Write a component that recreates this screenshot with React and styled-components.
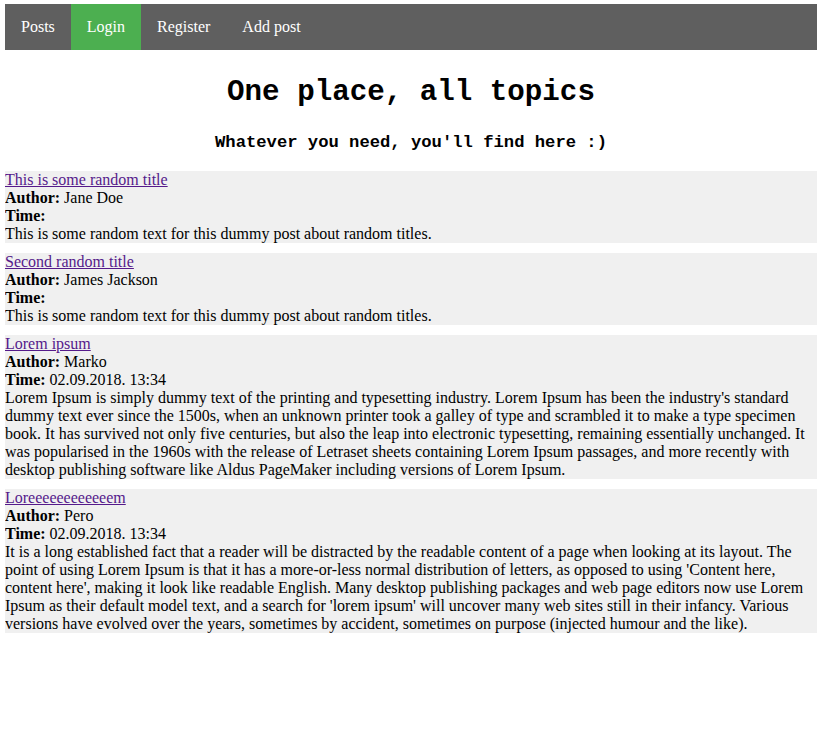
import styled, { createGlobalStyle } from "styled-components";

const GlobalStyle = createGlobalStyle`
  body {
    margin: 4px 6px 4px 5px;
    font-family: "Liberation Serif", "Times New Roman", serif;
    font-size: 16px;
    color: #000;
    background: #fff;
  }
`;

const NavBar = styled.nav`
  display: flex;
  background-color: #5f5f5f;
  height: 46px;
`;

const NavLink = styled.a`
  display: flex;
  align-items: center;
  padding: 0 16px;
  color: #fff;
  text-decoration: none;
  font-size: 16px;
  background-color: ${(p) => (p.$active ? "#4caf50" : "transparent")};
`;

const Header = styled.header`
  text-align: center;
  font-family: "Liberation Mono", "DejaVu Sans Mono", monospace;
  font-weight: bold;
`;

const Title = styled.h1`
  font-size: 29.2px;
  margin: 25px 0 0;
  line-height: 36px;
`;

const Subtitle = styled.h3`
  font-size: 17.2px;
  margin: 21px 0 17px;
  line-height: 22px;
`;

const PostList = styled.div`
  display: flex;
  flex-direction: column;
  gap: 10px;
`;

const Post = styled.article`
  background-color: #f0f0f0;
  line-height: 18px;
`;

const PostTitle = styled.a`
  display: block;
  color: #551a8b;
  text-decoration: underline;
  width: fit-content;
`;

const Line = styled.div``;

const Text = styled.p`
  margin: 0;
`;

const posts = [
  {
    title: "This is some random title",
    author: "Jane Doe",
    time: "",
    text: "This is some random text for this dummy post about random titles.",
  },
  {
    title: "Second random title",
    author: "James Jackson",
    time: "",
    text: "This is some random text for this dummy post about random titles.",
  },
  {
    title: "Lorem ipsum",
    author: "Marko",
    time: "02.09.2018. 13:34",
    text: "Lorem Ipsum is simply dummy text of the printing and typesetting industry. Lorem Ipsum has been the industry's standard dummy text ever since the 1500s, when an unknown printer took a galley of type and scrambled it to make a type specimen book. It has survived not only five centuries, but also the leap into electronic typesetting, remaining essentially unchanged. It was popularised in the 1960s with the release of Letraset sheets containing Lorem Ipsum passages, and more recently with desktop publishing software like Aldus PageMaker including versions of Lorem Ipsum.",
  },
  {
    title: "Loreeeeeeeeeeeem",
    author: "Pero",
    time: "02.09.2018. 13:34",
    text: "It is a long established fact that a reader will be distracted by the readable content of a page when looking at its layout. The point of using Lorem Ipsum is that it has a more-or-less normal distribution of letters, as opposed to using 'Content here, content here', making it look like readable English. Many desktop publishing packages and web page editors now use Lorem Ipsum as their default model text, and a search for 'lorem ipsum' will uncover many web sites still in their infancy. Various versions have evolved over the years, sometimes by accident, sometimes on purpose (injected humour and the like).",
  },
];

const App = () => {
  return (
    <>
      <GlobalStyle />
      <NavBar>
        <NavLink href="#">Posts</NavLink>
        <NavLink href="#" $active>
          Login
        </NavLink>
        <NavLink href="#">Register</NavLink>
        <NavLink href="#">Add post</NavLink>
      </NavBar>
      <Header>
        <Title>One place, all topics</Title>
        <Subtitle>Whatever you need, you'll find here :)</Subtitle>
      </Header>
      <PostList>
        {posts.map((post) => (
          <Post key={post.title}>
            <PostTitle href="#">{post.title}</PostTitle>
            <Line>
              <b>Author:</b> {post.author}
            </Line>
            <Line>
              <b>Time:</b> {post.time}
            </Line>
            <Text>{post.text}</Text>
          </Post>
        ))}
      </PostList>
    </>
  );
};

export default App;
